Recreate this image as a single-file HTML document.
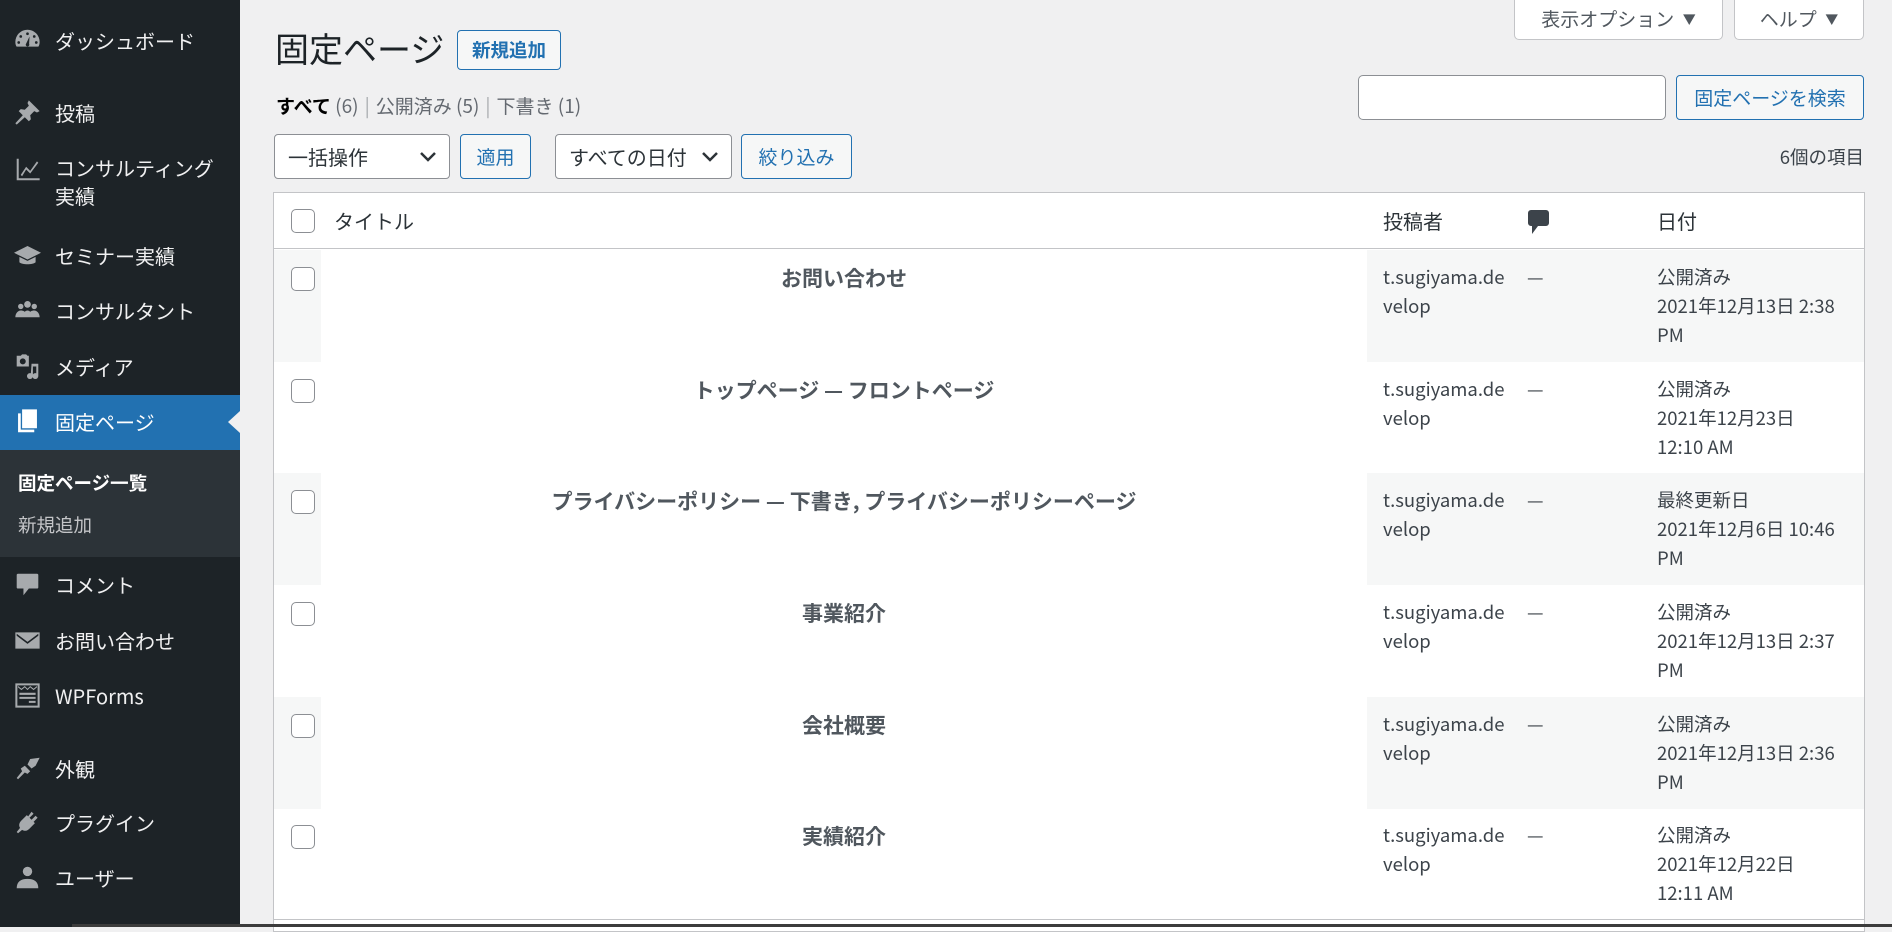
<!DOCTYPE html>
<html><head><meta charset="utf-8"><style>
*{box-sizing:border-box;margin:0;padding:0}
body{width:1892px;height:927px;overflow:hidden;background:#f0f0f1;font-family:"Noto Sans CJK JP","Liberation Sans",sans-serif;color:#3c434a;position:relative}
.abs{position:absolute}
#side{position:absolute;left:0;top:0;width:240px;height:927px;background:#1d2327}
.mi{position:absolute;left:0;width:240px;color:#f0f0f1;font-size:20px;line-height:28px}
.mi span{position:absolute;left:55px}
.mi svg{position:absolute;left:14px;width:27px;height:27px;fill:#a7aaad}
.btn{position:absolute;border:1px solid #2271b1;color:#2271b1;background:#f6f7f7;border-radius:4px;font-size:18px;display:flex;align-items:center;justify-content:center}
.sel{position:absolute;border:1px solid #8c8f94;background:#fff;border-radius:4px;font-size:20px;color:#2c3338;display:flex;align-items:center;padding-left:13px}
.sel svg{position:absolute;right:12px;top:16px}
.cb{position:absolute;left:291px;width:24px;height:24px;border:1.5px solid #8c8f94;border-radius:5px;background:#fff}
.row{position:absolute;left:274px;width:1590px;height:112px}
.c1{position:absolute;left:0;top:0;width:47px;height:100%}
.c3{position:absolute;left:1093px;top:0;width:497px;height:100%}
.g{background:#f6f7f7}
.t{position:absolute;left:47px;width:1046px;top:14px;text-align:center;font-weight:bold;font-size:21px;line-height:29px;color:#50575e}
.au{position:absolute;left:1109px;top:13px;font-size:18.5px;line-height:29px;width:135px;word-break:break-all}
.cm{position:absolute;left:1253px;top:13px;font-size:18.5px;line-height:29px}
.dt{position:absolute;left:1383px;top:13px;font-size:18.5px;line-height:29px;width:200px}
.sep{color:#a7aaad;margin:0 6px}
</style></head><body>
<div id="side">
<div class="mi" style="top:27px"><svg viewBox="0 0 20 20" style="top:0"><path d="M10 2a9 9 0 0 0-9 9c0 1.5.3 2.5.9 3.5h16.2c.6-1 .9-2 .9-3.5a9 9 0 0 0-9-9zm0 2a1 1 0 1 1 0 2 1 1 0 0 1 0-2zM5 6a1 1 0 1 1 0 2 1 1 0 0 1 0-2zm10 0a1 1 0 1 1 0 2 1 1 0 0 1 0-2zM3.5 10.5a1 1 0 1 1 0 2 1 1 0 0 1 0-2zm13 0a1 1 0 1 1 0 2 1 1 0 0 1 0-2zM11.5 7l-.3 5.5a1.3 1.3 0 1 1-2.2-.2z"/></svg><span>ダッシュボード</span></div>
<div class="mi" style="top:99px"><svg viewBox="0 0 20 20" style="top:0"><path d="M11 1l8 8-2 1-2-1-3 3 .5 3-1.5 1.5-3-3L2 19l-1-1 5.5-6-3-3L5 7.5l3 .5 3-3-1-2z"/></svg><span>投稿</span></div>
<div class="mi" style="top:154px"><svg viewBox="0 0 20 20" style="top:2px"><path d="M2 2h1.5v14.5H19V18H2zM5 14l4-6 3 3 5-7 1 1-6 8-3-3-3 5z"/></svg><span>コンサルティング<br>実績</span></div>
<div class="mi" style="top:242px"><svg viewBox="0 0 20 20" style="top:0"><path d="M10 3L0 8l10 5 10-5zM4 11v4c2 2 10 2 12 0v-4l-6 3z"/></svg><span>セミナー実績</span></div>
<div class="mi" style="top:297px"><svg viewBox="0 0 20 20" style="top:0"><circle cx="5" cy="7" r="2"/><circle cx="10" cy="5.5" r="2.5"/><circle cx="15" cy="7" r="2"/><path d="M1 15c0-3 2-5 4-5s3 1 3 1c.5-.6 1.2-1 2-1s1.5.4 2 1c0 0 1-1 3-1s4 2 4 5z"/></svg><span>コンサルタント</span></div>
<div class="mi" style="top:353px"><svg viewBox="0 0 20 20" style="top:0"><path d="M2 2h3l1-1h3l1 1h1v8H2zm4.5 2a2.2 2.2 0 1 0 0 4.4 2.2 2.2 0 0 0 0-4.4zM13 8h5v9a2.2 2.2 0 1 1-1.5-2V10H14v7a2.2 2.2 0 1 1-1.5-2z"/></svg><span>メディア</span></div>
<div class="abs" style="left:0;top:395px;width:240px;height:55px;background:#2271b1"></div>
<div class="abs" style="left:228px;top:411px;width:0;height:0;border-top:11px solid transparent;border-bottom:11px solid transparent;border-right:12px solid #f0f0f1"></div>
<div class="mi" style="top:408px;color:#fff"><svg viewBox="0 0 20 20" style="top:0;fill:#fff"><path d="M6 1h11v14H6zM3 4h2v12h10v2H3z"/></svg><span>固定ページ</span></div>
<div class="abs" style="left:0;top:450px;width:240px;height:107px;background:#2c3338"></div>
<div class="abs" style="left:18px;top:469px;color:#fff;font-weight:bold;font-size:18.5px;line-height:28px">固定ページ一覧</div>
<div class="abs" style="left:18px;top:511px;color:#c3c4c7;font-size:18.5px;line-height:28px">新規追加</div>
<div class="mi" style="top:571px"><svg viewBox="0 0 20 20" style="top:0"><path d="M3 2h14a1 1 0 0 1 1 1v9a1 1 0 0 1-1 1h-6l-4 5v-5H3a1 1 0 0 1-1-1V3a1 1 0 0 1 1-1z"/></svg><span>コメント</span></div>
<div class="mi" style="top:627px"><svg viewBox="0 0 20 20" style="top:0"><path d="M1 4h18v12H1z"/><path d="M2 5l8 6 8-6v1.5l-8 6-8-6z" fill="#1d2327"/></svg><span>お問い合わせ</span></div>
<div class="mi" style="top:682px"><svg viewBox="0 0 20 20" style="top:0"><path d="M1 1h18v18H1zm1.5 1.5v15h15v-15zM3 3l2.5 2L8 3l2 2 2-2 2.5 2L17 3v1l-2.5 2L12 4l-2 2-2-2-2.5 2L3 4zm1 5h12v1.5H4zm0 3h12v1.5H4zm7 3h5v1.5h-5z"/></svg><span>WPForms</span></div>
<div class="mi" style="top:755px"><svg viewBox="0 0 20 20" style="top:0"><path d="M12 3l7-1-3 6-3 2-3-3zM8 8l4 4-2 2-2-1-5 5-1-1 4-5-1-2z"/></svg><span>外観</span></div>
<div class="mi" style="top:809px"><svg viewBox="0 0 20 20" style="top:0"><path d="M13 2l1.5 1.5-3 3L13 8l3-3 1.5 1.5-3 3 1 1-4 4c-2 2-4 2-5.5 1L3 18l-1-1 2.5-3c-1-1.5-1-3.5 1-5.5l4-4 1 1z"/></svg><span>プラグイン</span></div>
<div class="mi" style="top:864px"><svg viewBox="0 0 20 20" style="top:0"><circle cx="10" cy="5.5" r="3.5"/><path d="M2 18c0-5 3-7 8-7s8 2 8 7z"/></svg><span>ユーザー</span></div>
</div>

<div class="abs" style="left:275px;top:26px;font-size:34px;line-height:44px;color:#1d2327">固定ページ</div>
<div class="btn" style="left:457px;top:30px;width:104px;height:40px;font-weight:bold;font-size:18.5px">新規追加</div>

<div class="abs" style="left:1514px;top:-4px;width:209px;height:44px;background:#fff;border:1px solid #c3c4c7;border-radius:0 0 5px 5px;font-size:19px;color:#50575e;display:flex;align-items:center;justify-content:center">表示オプション&nbsp;&nbsp;<span style="font-size:13px">▼</span></div>
<div class="abs" style="left:1734px;top:-4px;width:130px;height:44px;background:#fff;border:1px solid #c3c4c7;border-radius:0 0 5px 5px;font-size:19px;color:#50575e;display:flex;align-items:center;justify-content:center">ヘルプ&nbsp;&nbsp;<span style="font-size:13px">▼</span></div>

<div class="abs" style="left:276px;top:92px;font-size:19px;line-height:28px;color:#646970"><b style="color:#000">すべて</b> (6)<span class="sep">|</span>公開済み (5)<span class="sep">|</span>下書き (1)</div>

<div class="abs" style="left:1358px;top:75px;width:308px;height:45px;background:#fff;border:1px solid #8c8f94;border-radius:5px"></div>
<div class="btn" style="left:1676px;top:75px;width:188px;height:45px;font-size:19px">固定ページを検索</div>

<div class="sel" style="left:274px;top:134px;width:176px;height:45px">一括操作<svg width="18" height="12" viewBox="0 0 18 12"><path d="M2 2l7 7 7-7" stroke="#2c3338" stroke-width="2.5" fill="none"/></svg></div>
<div class="btn" style="left:460px;top:134px;width:71px;height:45px;font-size:19px">適用</div>
<div class="sel" style="left:555px;top:134px;width:177px;height:45px">すべての日付<svg width="18" height="12" viewBox="0 0 18 12"><path d="M2 2l7 7 7-7" stroke="#2c3338" stroke-width="2.5" fill="none"/></svg></div>
<div class="btn" style="left:741px;top:134px;width:111px;height:45px;font-size:19px">絞り込み</div>
<div class="abs" style="right:28px;top:143px;font-size:18.5px;line-height:28px">6個の項目</div>

<div class="abs" style="left:273px;top:192px;width:1592px;height:740px;background:#fff;border:1px solid #c3c4c7"></div>
<div class="abs" style="left:274px;top:248px;width:1590px;height:1px;background:#c3c4c7"></div>
<div class="cb" style="top:209px"></div>
<div class="abs" style="left:334px;top:206px;font-size:20px;line-height:30px;color:#2c3338">タイトル</div>
<div class="abs" style="left:1383px;top:206px;font-size:20px;line-height:30px;color:#2c3338">投稿者</div>
<svg class="abs" style="left:1528px;top:210px" width="21" height="24" viewBox="0 0 21 24"><path d="M3 0h15a3 3 0 0 1 3 3v10a3 3 0 0 1-3 3h-8l-6 8v-8H3a3 3 0 0 1-3-3V3a3 3 0 0 1 3-3z" fill="#3c434a"/></svg>
<div class="abs" style="left:1657px;top:206px;font-size:20px;line-height:30px;color:#2c3338">日付</div>

<div class="row" style="top:250px"><div class="c1 g"></div><div class="c3 g"></div><div class="t">お問い合わせ</div><div class="au">t.sugiyama.de<br>velop</div><div class="cm">—</div><div class="dt">公開済み<br>2021年12月13日 2:38<br>PM</div></div>
<div class="row" style="top:362px"><div class="t">トップページ — フロントページ</div><div class="au">t.sugiyama.de<br>velop</div><div class="cm">—</div><div class="dt">公開済み<br>2021年12月23日<br>12:10 AM</div></div>
<div class="row" style="top:473px"><div class="c1 g"></div><div class="c3 g"></div><div class="t">プライバシーポリシー — 下書き, プライバシーポリシーページ</div><div class="au">t.sugiyama.de<br>velop</div><div class="cm">—</div><div class="dt">最終更新日<br>2021年12月6日 10:46<br>PM</div></div>
<div class="row" style="top:585px"><div class="t">事業紹介</div><div class="au">t.sugiyama.de<br>velop</div><div class="cm">—</div><div class="dt">公開済み<br>2021年12月13日 2:37<br>PM</div></div>
<div class="row" style="top:697px"><div class="c1 g"></div><div class="c3 g"></div><div class="t">会社概要</div><div class="au">t.sugiyama.de<br>velop</div><div class="cm">—</div><div class="dt">公開済み<br>2021年12月13日 2:36<br>PM</div></div>
<div class="row" style="top:808px"><div class="t">実績紹介</div><div class="au">t.sugiyama.de<br>velop</div><div class="cm">—</div><div class="dt">公開済み<br>2021年12月22日<br>12:11 AM</div></div>

<div class="cb" style="top:267px"></div>
<div class="cb" style="top:379px"></div>
<div class="cb" style="top:490px"></div>
<div class="cb" style="top:602px"></div>
<div class="cb" style="top:714px"></div>
<div class="cb" style="top:825px"></div>

<div class="abs" style="left:274px;top:919px;width:1590px;height:1px;background:#c3c4c7"></div>
<div class="abs" style="left:72px;top:924px;width:1820px;height:3px;background:#3c3c3c"></div>
</body></html>
